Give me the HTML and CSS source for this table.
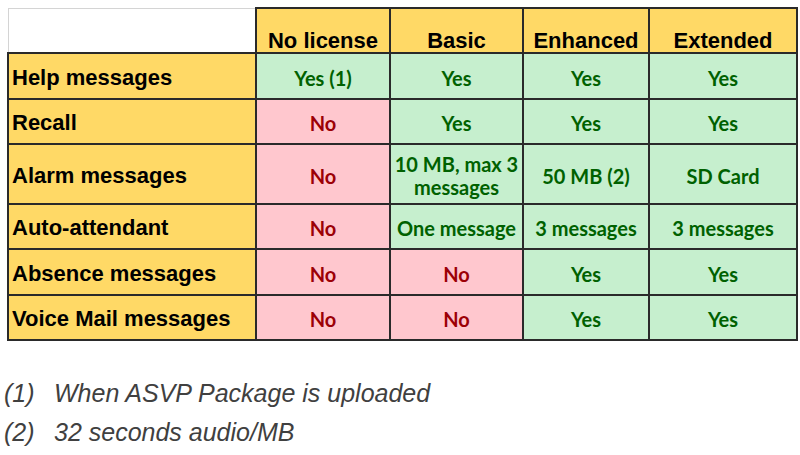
FILE: index.html
```html
<!DOCTYPE html>
<html lang="en">
<head>
<meta charset="utf-8">
<title>License comparison</title>
<link rel="stylesheet" href="styles.css">
</head>
<body>
<div class="page">
  <table class="grid">
    <colgroup>
      <col class="c-label">
      <col class="c-none">
      <col class="c-basic">
      <col class="c-enh">
      <col class="c-ext">
    </colgroup>
    <thead>
      <tr class="r-head">
        <th class="corner"></th>
        <th class="head">No license</th>
        <th class="head">Basic</th>
        <th class="head">Enhanced</th>
        <th class="head">Extended</th>
      </tr>
    </thead>
    <tbody>
      <tr class="r-a">
        <th class="label">Help messages</th>
        <td class="yes">Yes (1)</td>
        <td class="yes">Yes</td>
        <td class="yes">Yes</td>
        <td class="yes">Yes</td>
      </tr>
      <tr class="r-b">
        <th class="label">Recall</th>
        <td class="no">No</td>
        <td class="yes">Yes</td>
        <td class="yes">Yes</td>
        <td class="yes">Yes</td>
      </tr>
      <tr class="r-tall">
        <th class="label">Alarm messages</th>
        <td class="no">No</td>
        <td class="yes">10 MB, max 3<br>messages</td>
        <td class="yes">50 MB (2)</td>
        <td class="yes">SD Card</td>
      </tr>
      <tr class="r-b">
        <th class="label">Auto-attendant</th>
        <td class="no">No</td>
        <td class="yes">One message</td>
        <td class="yes">3 messages</td>
        <td class="yes">3 messages</td>
      </tr>
      <tr class="r-a">
        <th class="label">Absence messages</th>
        <td class="no">No</td>
        <td class="no">No</td>
        <td class="yes">Yes</td>
        <td class="yes">Yes</td>
      </tr>
      <tr class="r-b">
        <th class="label">Voice Mail messages</th>
        <td class="no">No</td>
        <td class="no">No</td>
        <td class="yes">Yes</td>
        <td class="yes">Yes</td>
      </tr>
    </tbody>
  </table>

  <ol class="notes">
    <li class="note"><span class="mark">(1)</span><span class="text">When ASVP Package is uploaded</span></li>
    <li class="note"><span class="mark">(2)</span><span class="text">32 seconds audio/MB</span></li>
  </ol>
</div>
</body>
</html>
```

FILE: styles.css
```css
html, body {
  margin: 0;
  padding: 0;
  background: #ffffff;
}

.page {
  width: 800px;
  height: 455px;
  padding: 7px 0 0 7px;
  box-sizing: border-box;
  overflow: hidden;
}

.grid {
  border-collapse: collapse;
  table-layout: fixed;
  width: 789px;
}

.c-label { width: 248px; }
.c-none  { width: 134px; }
.c-basic { width: 133px; }
.c-enh   { width: 126px; }
.c-ext   { width: 148px; }

.grid th,
.grid td {
  border: 2px solid #2a2a2a;
  padding: 0;
}

.r-head { height: 45px; }
.r-a    { height: 46px; }
.r-b    { height: 45px; }
.r-tall { height: 60px; }

.grid .corner {
  background: #ffffff;
  border-top: 1px solid #d4d4d4;
  border-left: 1px solid #d4d4d4;
}

.grid .head {
  background: #ffd966;
  font-family: "Liberation Sans", Arial, sans-serif;
  font-weight: bold;
  font-size: 22px;
  color: #000000;
  text-align: center;
  vertical-align: bottom;
  padding: 0;
  line-height: 22px;
}

.grid .label {
  background: #ffd966;
  font-family: "Liberation Sans", Arial, sans-serif;
  font-weight: bold;
  font-size: 22px;
  color: #000000;
  text-align: left;
  vertical-align: middle;
  padding: 3px 0 0 3px;
  white-space: nowrap;
}

.grid .yes,
.grid .no {
  font-family: Lato, "Open Sans", sans-serif;
  font-weight: bold;
  font-size: 20px;
  text-align: center;
  vertical-align: middle;
  line-height: 23px;
  padding: 4px 0 0 0;
  white-space: nowrap;
}

.grid .yes {
  background: #c6efce;
  color: #006100;
}

.grid .no {
  background: #ffc7ce;
  color: #9c0006;
}

.notes {
  list-style: none;
  margin: 33px 0 0 -3px;
  padding: 0;
  font-family: "Liberation Sans", Arial, sans-serif;
  font-style: italic;
  font-size: 25px;
  color: #404040;
}

.note {
  display: flex;
  line-height: 39px;
}

.mark {
  width: 50px;
  flex: none;
}
```
